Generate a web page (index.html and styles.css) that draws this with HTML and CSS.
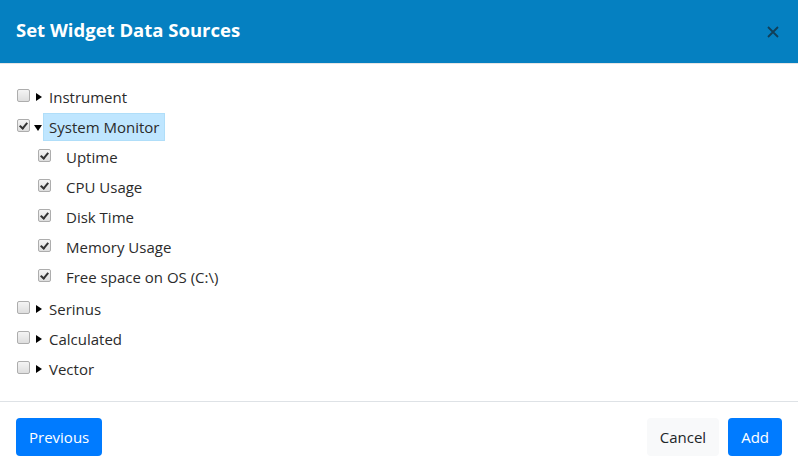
FILE: index.html
```html
<!DOCTYPE html>
<html>
<head>
    <meta charset="utf-8" />
    <title>Set Widget Data Sources</title>
    <link rel="stylesheet" href="styles.css">
</head>
<body>
    <div class="modal">
        <div class="modal_header">
            <h5 class="modal_title">Set Widget Data Sources</h5>
            <span class="close">
                <svg width="12" height="12" viewBox="0 0 12 12"><path d="M1 1 L11 11 M11 1 L1 11" stroke="#123f58" stroke-width="1.8" fill="none" /></svg>
            </span>
        </div>
        <div class="modal_body">
            <ul class="tree">
                <li>
                    <div class="node"><span class="chk"></span><span class="arrow"><i class="tri right"></i></span><span class="label">Instrument</span></div>
                </li>
                <li>
                    <div class="node"><span class="chk on"></span><span class="arrow"><i class="tri down"></i></span><span class="label selected">System Monitor</span></div>
                    <ul class="children">
                        <li><div class="node"><span class="chk on"></span><span class="label">Uptime</span></div></li>
                        <li><div class="node"><span class="chk on"></span><span class="label">CPU Usage</span></div></li>
                        <li><div class="node"><span class="chk on"></span><span class="label">Disk Time</span></div></li>
                        <li><div class="node"><span class="chk on"></span><span class="label">Memory Usage</span></div></li>
                        <li><div class="node"><span class="chk on"></span><span class="label">Free space on OS (C:\)</span></div></li>
                    </ul>
                </li>
                <li>
                    <div class="node"><span class="chk"></span><span class="arrow"><i class="tri right"></i></span><span class="label">Serinus</span></div>
                </li>
                <li>
                    <div class="node"><span class="chk"></span><span class="arrow"><i class="tri right"></i></span><span class="label">Calculated</span></div>
                </li>
                <li>
                    <div class="node"><span class="chk"></span><span class="arrow"><i class="tri right"></i></span><span class="label">Vector</span></div>
                </li>
            </ul>
        </div>
        <div class="modal_footer">
            <button class="btn btn_primary">Previous</button>
            <div class="spacer"></div>
            <button class="btn btn_light">Cancel</button>
            <button class="btn btn_primary">Add</button>
        </div>
    </div>
</body>
</html>
```

FILE: styles.css
```css
*
{
    margin: 0;
    padding: 0;
    box-sizing: border-box;
}

body
{
    font-family: 'Open Sans', 'Noto Sans', sans-serif;
    font-size: 15px;
    color: #2b2b2b;
    background: #fff;
}

.modal
{
    width: 798px;
    height: 472px;
    display: flex;
    flex-direction: column;
}

.modal_header
{
    height: 64px;
    background: #0580c1;
    display: flex;
    align-items: center;
    padding: 0 16px;
    border-bottom: 1px solid #e5e5e5;
}

    .modal_header .modal_title
    {
        flex: 1;
        color: #fff;
        font-size: 18.5px;
        font-weight: 700;
        margin-top: -4px;
    }

    .modal_header .close
    {
        display: flex;
        margin-right: 3px;
        margin-top: 0;
    }

.modal_body
{
    flex: 1;
    padding: 18px 0 0 16px;
}

.tree
{
    list-style: none;
}

    .tree .node
    {
        height: 30px;
        display: flex;
        align-items: center;
    }

    .tree .children
    {
        list-style: none;
        padding-left: 21px;
        margin-bottom: 2px;
    }

.chk
{
    width: 13px;
    height: 13px;
    border: 1px solid #adadad;
    border-radius: 2px;
    background: linear-gradient(#f4f4f4, #dedede);
    margin: -3px 0 0 1px;
    position: relative;
}

    .chk.on::after
    {
        content: '';
        position: absolute;
        left: 3px;
        top: 1px;
        width: 3px;
        height: 6px;
        border: solid #333;
        border-width: 0 2px 2px 0;
        transform: rotate(40deg);
    }

.arrow
{
    width: 15px;
    height: 30px;
    display: flex;
    align-items: center;
    justify-content: center;
}

.tri
{
    width: 0;
    height: 0;
    border-style: solid;
    border-color: transparent;
}

    .tri.right
    {
        border-width: 4px 0 4px 6px;
        border-left-color: #000;
        margin: 0 0 0 3px;
    }

    .tri.down
    {
        border-width: 6px 4px 0 4px;
        border-top-color: #000;
        margin: 1px 0 0 0;
    }

.label
{
    padding: 0 5px;
    line-height: 28px;
    margin-left: -1px;
}

    .label.selected
    {
        background: #bfe6ff;
        border: 1px solid #b0def9;
        line-height: 26px;
        margin-left: -2px;
    }

.children .label
{
    margin-left: 10px;
}

.modal_footer
{
    height: 71px;
    border-top: 1px solid #dee2e6;
    display: flex;
    align-items: center;
    padding: 0 16px;
    gap: 8px;
}

    .modal_footer .spacer
    {
        flex: 1;
    }

.btn
{
    font-family: inherit;
    font-size: 15px;
    height: 38px;
    padding: 0 12px;
    border: 1px solid transparent;
    border-radius: 4px;
}

.btn_primary
{
    background: #007bff;
    color: #fff;
}

.btn_light
{
    background: #f8f9fa;
    color: #212529;
    margin-right: 1px;
}
```
